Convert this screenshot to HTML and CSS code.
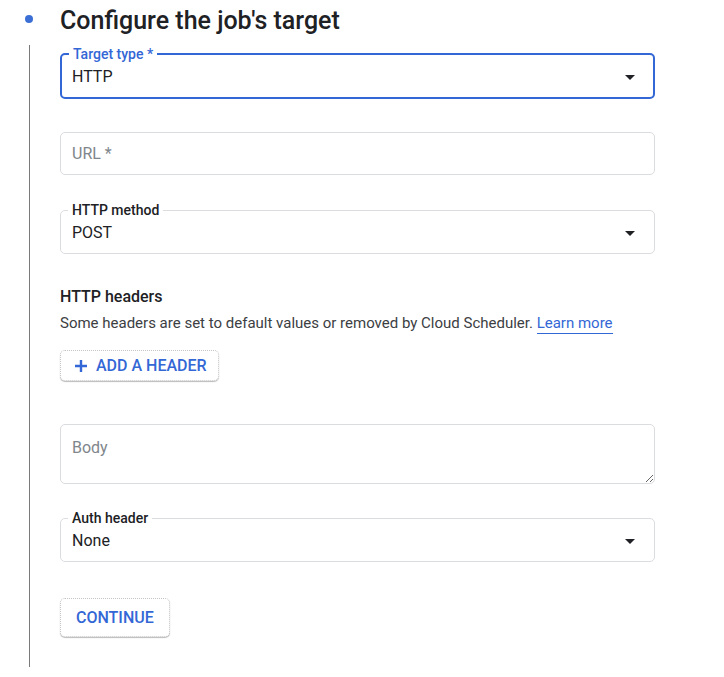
FILE: index.html
```html
<!DOCTYPE html>
<html lang="en">
<head>
<meta charset="utf-8">
<title>Configure the job's target</title>
<link rel="stylesheet" href="styles.css">
</head>
<body>
<div class="step">
  <div class="rail">
    <span class="rail-dot"></span>
    <span class="rail-line"></span>
  </div>
  <div class="content">
    <h2 class="title">Configure the job's target</h2>

    <fieldset class="field field-focused">
      <legend class="field-label">Target type *</legend>
      <div class="field-row"><span class="field-value">HTTP</span><span class="caret"></span></div>
    </fieldset>

    <input class="text-input url-input" type="text" placeholder="URL *">

    <fieldset class="field method-field">
      <legend class="field-label">HTTP method</legend>
      <div class="field-row"><span class="field-value">POST</span><span class="caret"></span></div>
    </fieldset>

    <h3 class="section-heading">HTTP headers</h3>
    <p class="section-desc">Some headers are set to default values or removed by Cloud Scheduler. <a class="link" href="#">Learn more</a></p>

    <button class="btn btn-add" type="button">
      <svg class="btn-icon" width="14" height="14" viewBox="0 0 14 14" aria-hidden="true"><path d="M7 1v12M1 7h12" stroke="currentColor" stroke-width="2.4" fill="none"/></svg>
      <span>ADD A HEADER</span>
    </button>

    <textarea class="text-input body-input" placeholder="Body"></textarea>

    <fieldset class="field auth-field">
      <legend class="field-label">Auth header</legend>
      <div class="field-row"><span class="field-value">None</span><span class="caret"></span></div>
    </fieldset>

    <button class="btn btn-continue" type="button">CONTINUE</button>
  </div>
</div>
</body>
</html>
```
FILE: styles.css
```css
* { box-sizing: border-box; }

html, body {
  margin: 0;
  padding: 0;
  background: #ffffff;
}

body {
  font-family: Roboto, "Liberation Sans", Arial, sans-serif;
  color: #202124;
}

.step {
  display: grid;
  grid-template-columns: 60px 595px;
  min-height: 677px;
}

.rail {
  display: flex;
  flex-direction: column;
  align-items: flex-start;
  padding-bottom: 10px;
}

.rail-dot {
  width: 8px;
  height: 8px;
  border-radius: 50%;
  background: #3b6fd6;
  margin: 15px 0 0 25px;
}

.rail-line {
  flex: 1;
  width: 1px;
  background: #7a7a7a;
  margin: 22px 0 0 29px;
}

.content {
  display: flex;
  flex-direction: column;
}

.title {
  margin: 0;
  padding-top: 5px;
  font-size: 25px;
  line-height: 32px;
  font-weight: 500;
  color: #202124;
}

.field {
  margin: 9px 0 0;
  padding: 5px 11px 10px;
  border: 1px solid #dadce0;
  border-radius: 5px;
  min-width: 0;
}

.field-focused {
  border: 2px solid #3367d6;
  padding: 5px 10px 10px;
}

.field-label {
  margin-left: -4px;
  padding: 0 4px;
  font-size: 14px;
  line-height: 16px;
  font-weight: 500;
  color: #202124;
}

.field-focused .field-label {
  margin-left: -3px;
  color: #3367d6;
}

.field-row {
  display: flex;
  align-items: center;
  justify-content: space-between;
  height: 20px;
}

.field-value {
  font-size: 16px;
  line-height: 20px;
}

.caret {
  width: 0;
  height: 0;
  border-left: 5px solid transparent;
  border-right: 5px solid transparent;
  border-top: 5px solid #202124;
  margin-right: 8px;
}

.text-input {
  display: block;
  width: 100%;
  margin: 0;
  border: 1px solid #dadce0;
  border-radius: 5px;
  font-family: Roboto, "Liberation Sans", Arial, sans-serif;
  font-size: 16px;
  color: #202124;
  background: #fff;
  outline: none;
}

.text-input::placeholder {
  color: #80868b;
}

.url-input {
  margin-top: 33px;
  height: 43px;
  padding: 0 11px;
}

.method-field {
  margin-top: 27px;
}

.section-heading {
  margin: 33px 0 0;
  font-size: 16px;
  line-height: 20px;
  font-weight: 500;
  color: #202124;
}

.section-desc {
  margin: 6px 0 0;
  font-size: 15px;
  line-height: 20px;
  color: #3c4043;
}

.link {
  color: #3367d6;
  text-decoration: none;
  border-bottom: 1px solid #3367d6;
  padding-bottom: 1px;
}

.btn {
  display: inline-flex;
  align-items: center;
  align-self: flex-start;
  gap: 8px;
  font-family: Roboto, "Liberation Sans", Arial, sans-serif;
  font-size: 16px;
  font-weight: 500;
  color: #3367d6;
  background: #fff;
  border: 1px dotted #c4c4c4;
  border-radius: 5px;
  box-shadow: 0 1px 1px rgba(60, 64, 67, 0.35);
  cursor: pointer;
}

.btn-add {
  margin-top: 17px;
  height: 31px;
  padding: 0 11px 0 13px;
}

.btn-icon {
  display: block;
}

.body-input {
  margin-top: 43px;
  height: 60px;
  padding: 13px 11px;
  resize: vertical;
  line-height: 20px;
}

.auth-field {
  margin-top: 26px;
}

.btn-continue {
  margin-top: 36px;
  height: 39px;
  padding: 0 15px;
}
```
